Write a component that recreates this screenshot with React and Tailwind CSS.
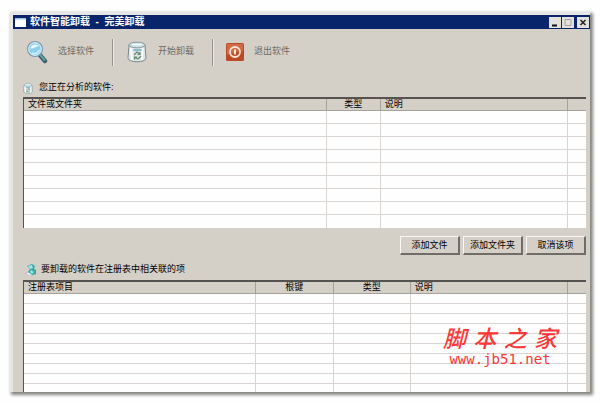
import clsx from 'clsx';

const fileColumns = [
  { label: '文件或文件夹', width: '' },
  { label: '类型', width: 'w-[54px]', center: true },
  { label: '说明', width: 'w-1/3' },
  { label: '', width: 'w-[18px]' }
];

const registryColumns = [
  { label: '注册表项目', width: '' },
  { label: '根键', width: 'w-[78px]', center: true },
  { label: '类型', width: 'w-[77px]', center: true },
  { label: '说明', width: 'w-[28%]' },
  { label: '', width: 'w-[18px]' }
];

function SearchIcon() {
  return (
    <svg viewBox="0 0 22 24" className="h-6 w-[22px]" aria-hidden="true">
      <path d="M13 14l6 7" stroke="#3f5f66" strokeWidth="4.4" strokeLinecap="round" />
      <path d="M13.5 14l5 6" stroke="#5fa0a5" strokeWidth="2" strokeLinecap="round" />
      <circle cx="9" cy="9" r="7.4" fill="#8fcfec" stroke="#7d9ab0" strokeWidth="1.4" />
      <circle cx="9" cy="9" r="6.3" fill="none" stroke="#e4f6fc" strokeWidth="1" />
      <path d="M4.5 8.5C5 4.500 10 3 13 6c-3 0-5 3-8.500 2.500z" fill="#e6f8ff" />
      <path d="M6 13c3 1.500 6 0 7.500-3" stroke="#c9f3fb" strokeWidth="1.500" fill="none" />
    </svg>
  );
}

function BinIcon({ className }) {
  return (
    <svg viewBox="0 0 20 22" className={className} aria-hidden="true">
      <path d="M2 4l-1 13c0 5 18 5 18 0L18 4z" fill="#dfe5e4" stroke="#7b8a8c" strokeWidth="1" />
      <path d="M4 7l1 12M15.500 7l-.5 12" stroke="#fff" strokeWidth="2" />
      <ellipse cx="10" cy="4" rx="8" ry="2.800" fill="#c9dfe8" stroke="#8b9ca0" strokeWidth="1" />
      <path d="M5 3.500h10" stroke="#f5ffff" strokeWidth="1.500" />
      <path d="M6.500 8h8v2h-8z" fill="#86bdd0" />
      <path d="M7 14l3-3 3 2M13 11v2.500h-2.500M14 15l-3 3-3.500-2M7.500 18.500V16H10" stroke="#5f8a72" strokeWidth="1.200" fill="none" />
    </svg>
  );
}

function PowerIcon() {
  return (
    <svg viewBox="0 0 18 18" className="size-[18px]" aria-hidden="true">
      <rect width="18" height="18" rx="1.500" fill="#b94a25" />
      <path d="M1 1h16v7C11 8 6 11 1 12z" fill="#cf6b46" />
      <circle cx="9" cy="9" r="5" fill="none" stroke="#f8e3d8" strokeWidth="1.800" />
      <path d="M9 6.500v5" stroke="#fff4ec" strokeWidth="1.800" />
    </svg>
  );
}

function RegistryIcon() {
  return (
    <svg viewBox="0 0 12 12" className="size-3" aria-hidden="true">
      <path d="M0 9.500l6-2 5 2-6 2.500z" fill="#eef4f4" stroke="#9ba8a8" strokeWidth="0.500" />
      <path d="M2 2l5-2 3 2-1 3 2 1v4L7 11 3 8l2-3z" fill="#37a6a4" />
      <path d="M3 2l4-1 1 3-3 1zM6 6l3 2-2 2-2-2z" fill="#9fe7e2" />
    </svg>
  );
}

function ToolButton({ icon, label }) {
  return (
    <button type="button" className="flex items-center gap-2.5 text-[#6d6a65]">
      {icon}
      {label}
    </button>
  );
}

function Divider() {
  return <div className="ml-1.5 h-[27px] w-0.5 border-l border-[#96938e] border-r border-r-[#eceae6]" />;
}

function Grid({ label, columns, rows, tall }) {
  return (
    <table
      aria-label={label}
      className="w-full table-fixed border-separate border-spacing-0 border-l border-t-2 border-[#55534f] bg-[#fdfefd]"
    >
      <thead>
        <tr>
          {columns.map((column, i) => (
            <th
              key={i}
              scope="col"
              className={clsx(
                'h-3 whitespace-nowrap border-b border-[#a5a29c] bg-[#d4d0c8] px-1 py-0 font-normal leading-[11px] text-black',
                column.width,
                column.center ? 'text-center' : 'text-left',
                i < columns.length - 1 && 'border-r shadow-[1px_0_0_#f4f3f0]'
              )}
            >
              {column.label}
            </th>
          ))}
        </tr>
      </thead>
      <tbody>
        {Array.from({ length: rows }, (_, row) => (
          <tr key={row}>
            {columns.map((_, i) => (
              <td
                key={i}
                className={clsx(
                  'border-[#dad5d3] p-0',
                  tall && 'h-[13px]',
                  !tall && (row < rows - 1 ? 'h-2.5' : 'h-2'),
                  row < rows - 1 && 'border-b',
                  i < columns.length - 1 && 'border-r'
                )}
              />
            ))}
          </tr>
        ))}
      </tbody>
    </table>
  );
}

function PushButton({ children }) {
  return (
    <button
      type="button"
      className="h-[19px] w-[60px] border border-b-2 border-r-2 border-[#f8f7f4] border-b-[#706d69] border-r-[#706d69] bg-[#d4d0c8] text-center leading-none text-black"
    >
      {children}
    </button>
  );
}

function CaptionButton({ label, children }) {
  return (
    <button type="button" aria-label={label} className="flex h-[11px] w-3 items-center justify-center bg-[#e3e1dc]">
      <svg viewBox="0 0 12 11" className="h-[11px] w-3" fill="none" aria-hidden="true">
        {children}
      </svg>
    </button>
  );
}

function Watermark() {
  return (
    <div className="pointer-events-none absolute bottom-[27px] right-[33px] flex w-[114px] flex-col text-[#fb3838]">
      <div className="flex justify-between text-[23px] font-medium italic leading-[28px]">
        <span>脚</span>
        <span>本</span>
        <span>之</span>
        <span>家</span>
      </div>
      <span className="text-center font-['DejaVu_Sans_Mono',monospace] text-sm leading-3">www.jb51.net</span>
    </div>
  );
}

function App() {
  return (
    <div className="bg-[#fdfefd] px-2.5 pb-[11px] pt-3 font-['Liberation_Sans','Noto_Sans_CJK_SC',sans-serif] text-[9px]">
      <div className="relative border-l-[3px] border-t-[3px] border-[#e6e6e5] bg-[#d4d0c8] shadow-[2px_2px_3px_1px_#858783]">
        <header className="flex h-3.5 items-center bg-[#08246b] pl-0.5 pr-px text-white">
          <svg viewBox="0 0 11 9" className="h-[9px] w-[11px]" aria-hidden="true">
            <path d="M0 0h11v9H0z" fill="#fff" />
            <path d="M0 0h11v1.500H0z" fill="#9fc7dc" />
          </svg>
          <h1 className="flex-1 whitespace-pre pl-1 text-[10px] font-bold leading-[14px]">软件智能卸载  -  完美卸载</h1>
          <div className="flex gap-px">
            <CaptionButton label="最小化">
              <path d="M3 8.500h5" stroke="#111" strokeWidth="2" />
            </CaptionButton>
            <CaptionButton label="最大化">
              <path d="M3 2.500h6v6H3z" stroke="#a5a39e" />
            </CaptionButton>
            <span className="w-px" />
            <CaptionButton label="关闭">
              <path d="M3.500 3l5 5m0-5l-5 5" stroke="#222" strokeWidth="1.500" />
            </CaptionButton>
          </div>
        </header>

        <nav className="flex h-11 items-center gap-3 pl-[13px] pt-0.5">
          <ToolButton icon={<SearchIcon />} label="选择软件" />
          <Divider />
          <ToolButton icon={<BinIcon className="h-[22px] w-[22px]" />} label="开始卸载" />
          <Divider />
          <ToolButton icon={<PowerIcon />} label="退出软件" />
        </nav>

        <main className="pl-2.5 pr-1">
          <h2 className="flex h-6 items-center gap-1.5 pb-1.5 pt-3">
            <BinIcon className="h-[11px] w-2.5" />
            您正在分析的软件:
          </h2>
          <Grid label="您正在分析的软件" columns={fileColumns} rows={9} tall />

          <div className="flex justify-end gap-[3px] pt-2">
            <PushButton>添加文件</PushButton>
            <PushButton>添加文件夹</PushButton>
            <PushButton>取消该项</PushButton>
          </div>

          <h2 className="flex h-[25px] items-center gap-1 pl-0.5 pt-1">
            <RegistryIcon />
            要卸载的软件在注册表中相关联的项
          </h2>
          <Grid label="注册表中相关联的项" columns={registryColumns} rows={10} />
        </main>
        <Watermark />
      </div>
    </div>
  );
}

export default App;
